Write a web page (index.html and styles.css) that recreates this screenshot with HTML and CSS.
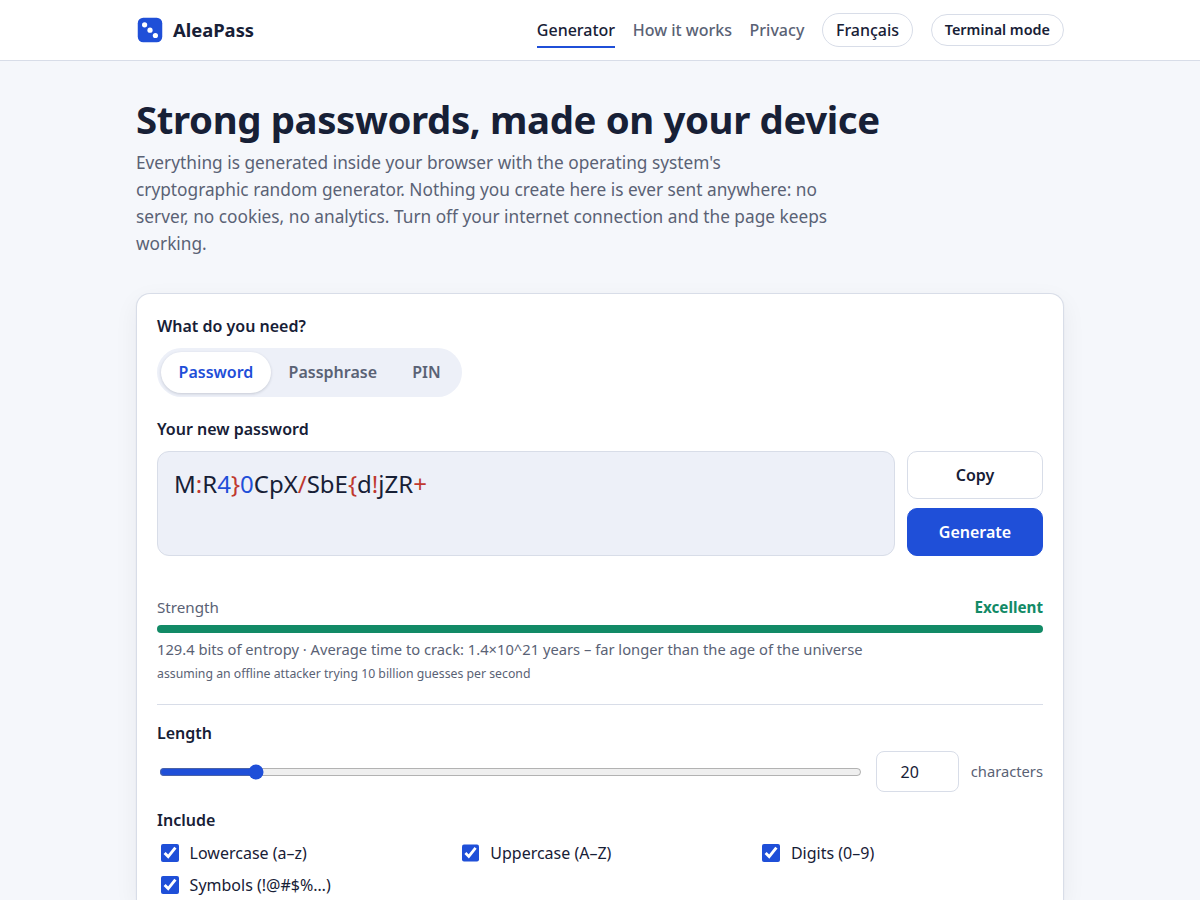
FILE: index.html
```
<!DOCTYPE html>
<html lang="en">
<head>
    <meta charset="UTF-8">
    <meta name="viewport" content="width=device-width, initial-scale=1.0">
    <title>AleaPass</title>
    <link rel="stylesheet" href="styles.css">
</head>
<body>
<header class="site-header">
    <div class="container header-inner">
        <a class="brand" href="#">
            <svg class="brand-logo" viewBox="0 0 28 28" aria-hidden="true">
                <rect x="1.75" y="1.75" width="24.5" height="24.5" rx="5.5" fill="#1f4fd8"/>
                <circle cx="8.6" cy="8.8" r="2.6" fill="#fff"/>
                <circle cx="14" cy="14.2" r="2.6" fill="#fff"/>
                <circle cx="19.4" cy="19.5" r="2.6" fill="#fff"/>
            </svg>
            <span>AleaPass</span>
        </a>
        <nav class="nav">
            <a class="nav-link active" href="#">Generator</a>
            <a class="nav-link" href="#">How it works</a>
            <a class="nav-link" href="#">Privacy</a>
            <a class="pill" href="#">Français</a>
            <button class="pill pill-button" type="button">Terminal mode</button>
        </nav>
    </div>
</header>

<main class="container">
    <h1>Strong passwords, made on your device</h1>
    <p class="lead">Everything is generated inside your browser with the operating system's cryptographic random generator. Nothing you create here is ever sent anywhere: no server, no cookies, no analytics. Turn off your internet connection and the page keeps working.</p>

    <section class="card">
        <h2 class="label">What do you need?</h2>
        <div class="tabs">
            <button class="tab selected" type="button">Password</button>
            <button class="tab" type="button">Passphrase</button>
            <button class="tab" type="button">PIN</button>
        </div>

        <h2 class="label">Your new password</h2>
        <div class="output-row">
            <output class="output">M<span class="sym">:</span>R<span class="num">4</span><span class="sym">}</span><span class="num">0</span>CpX<span class="sym">/</span>SbE<span class="sym">{</span>d<span class="sym">!</span>jZR<span class="sym">+</span></output>
            <div class="output-actions">
                <button class="btn" type="button">Copy</button>
                <button class="btn btn-primary" type="button">Generate</button>
            </div>
        </div>

        <div class="strength">
            <div class="strength-head">
                <span>Strength</span>
                <strong class="strength-value">Excellent</strong>
            </div>
            <div class="meter"></div>
            <p class="strength-text">129.4 bits of entropy · Average time to crack: 1.4×10^21 years – far longer than the age of the universe</p>
            <p class="strength-note">assuming an offline attacker trying 10 billion guesses per second</p>
        </div>

        <div class="options">
            <label class="label" for="length">Length</label>
            <div class="length-row">
                <input class="slider" id="length" type="range" min="4" max="128" value="20">
                <input class="number" type="number" min="4" max="128" value="20" aria-label="Length">
                <span class="unit">characters</span>
            </div>

            <h2 class="label">Include</h2>
            <div class="checks">
                <label class="check"><input type="checkbox" checked>Lowercase (a–z)</label>
                <label class="check"><input type="checkbox" checked>Uppercase (A–Z)</label>
                <label class="check"><input type="checkbox" checked>Digits (0–9)</label>
                <label class="check"><input type="checkbox" checked>Symbols (!@#$%…)</label>
            </div>
        </div>
    </section>
</main>
</body>
</html>
```

FILE: styles.css
```
:root {
    --bg: #f5f7fb;
    --surface: #ffffff;
    --surface-2: #edf0f8;
    --border: #d8dde8;
    --text: #172036;
    --muted: #5a6275;
    --accent: #1f4fd8;
    --symbol: #c0392f;
    --good: #128a66;
}

* {
    box-sizing: border-box;
}

body {
    display: flex;
    flex-direction: column;
    margin: 0;
    height: 100vh;
    overflow: hidden;
    background: var(--bg);
    color: var(--text);
    font-family: "Noto Sans", sans-serif;
    font-size: 16px;
    line-height: 1.6;
}

button,
input {
    font: inherit;
    color: inherit;
}

a {
    color: inherit;
    text-decoration: none;
}

.container {
    width: 100%;
    max-width: 960px;
    margin: 0 auto;
    padding: 0 16px;
}

main.container {
    flex: 1;
    min-height: 0;
    display: flex;
    flex-direction: column;
}

.site-header {
    background: var(--surface);
    border-bottom: 1px solid var(--border);
}

.header-inner {
    display: flex;
    justify-content: space-between;
    align-items: center;
    height: 60px;
}

.brand {
    display: flex;
    align-items: center;
    gap: 9px;
    font-size: 18.4px;
    font-weight: 700;
}

.brand-logo {
    width: 28px;
    height: 28px;
}

.nav {
    display: flex;
    align-items: center;
    gap: 17.6px;
    font-weight: 500;
}

.nav-link {
    padding: 5px 0 3px;
    border-bottom: 2px solid transparent;
    color: var(--muted);
    line-height: 25px;
}

.nav-link.active {
    color: var(--text);
    border-bottom-color: var(--accent);
}

.pill {
    padding: 4px 13px 3px;
    border: 1px solid var(--border);
    border-radius: 999px;
    background: var(--surface);
    line-height: 25px;
}

.pill-button {
    height: 32px;
    padding: 0 13px;
    font-size: 14.4px;
    font-weight: 600;
    line-height: 1;
}

h1 {
    margin: 34px 0 6px;
    font-size: 38.4px;
    font-weight: 700;
    letter-spacing: -0.01em;
    line-height: 48px;
}

.lead {
    max-width: 696px;
    margin: 0 0 36px;
    color: var(--muted);
    font-size: 17.28px;
    line-height: 27px;
}

.card {
    flex: 1;
    min-height: 0;
    padding: 20px;
    background: var(--surface);
    border: 1px solid var(--border);
    border-bottom: 0;
    border-radius: 14px 14px 0 0;
    box-shadow: 0 1px 2px rgba(23, 32, 58, 0.06), 0 8px 24px rgba(23, 32, 58, 0.06);
}

.label {
    display: block;
    margin: 0 0 9px;
    font-size: 16px;
    font-weight: 600;
    line-height: 25px;
}

.tabs {
    display: flex;
    width: fit-content;
    margin-bottom: 20px;
    padding: 4px;
    background: var(--surface-2);
    border-radius: 999px;
}

.tab {
    height: 41px;
    padding: 0 17.6px;
    border: 0;
    border-radius: 999px;
    background: none;
    color: var(--muted);
    font-weight: 600;
}

.tab.selected {
    background: var(--surface);
    color: var(--accent);
    box-shadow: 0 1px 3px rgba(23, 32, 58, 0.18);
}

.output-row {
    display: flex;
    gap: 12px;
}

.output {
    flex: 1;
    padding: 13px 16px;
    background: var(--surface-2);
    border: 1px solid var(--border);
    border-radius: 12px;
    font-size: 24px;
    line-height: 38px;
}

.output .num {
    color: var(--accent);
}

.output .sym {
    color: var(--symbol);
}

.output-actions {
    display: flex;
    flex-direction: column;
    gap: 9px;
    width: 136px;
}

.btn {
    height: 48px;
    padding: 2px 6px 0;
    border: 1px solid var(--border);
    border-radius: 10px;
    background: var(--surface);
    font-weight: 600;
}

.btn-primary {
    background: var(--accent);
    border-color: var(--accent);
    color: #fff;
}

.strength {
    margin-top: 39px;
    color: var(--muted);
    font-size: 15.2px;
}

.strength-head {
    display: flex;
    justify-content: space-between;
    line-height: 24px;
}

.strength-value {
    color: var(--good);
}

.meter {
    height: 8px;
    margin: 6px 0 4px;
    border-radius: 999px;
    background: var(--good);
}

.strength-text {
    margin: 0;
    font-size: 14.72px;
    line-height: 24px;
}

.strength-note {
    margin: 3px 0 0;
    font-size: 12.27px;
    line-height: 20px;
}

.options {
    margin-top: 20px;
    padding-top: 16px;
    border-top: 1px solid var(--border);
}

.length-row {
    display: flex;
    align-items: center;
    gap: 12px;
    margin: -4px 0 16px;
}

.slider {
    flex: 1;
    min-width: 0;
    accent-color: var(--accent);
}

.number {
    width: 83px;
    height: 41px;
    border: 1px solid var(--border);
    border-radius: 8px;
    background: var(--surface);
    text-align: center;
}

.unit {
    color: var(--muted);
    font-size: 14.72px;
}

.checks {
    display: grid;
    grid-template-columns: repeat(3, 1fr);
    gap: 6px 16px;
    margin-top: -2px;
}

.check {
    display: flex;
    align-items: center;
    gap: 8px;
    line-height: 26px;
}

.check input {
    width: 17.6px;
    height: 17.6px;
    margin: 3px 3px 3px 4px;
    accent-color: var(--accent);
}
```
